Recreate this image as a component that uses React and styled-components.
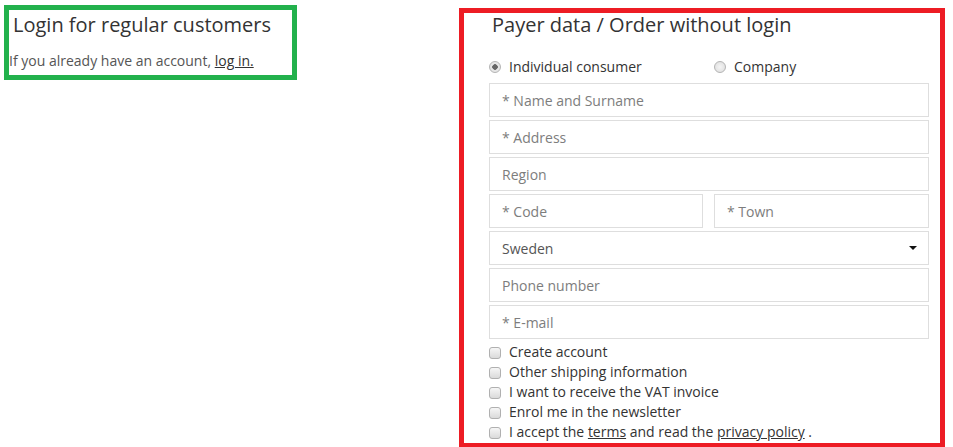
import React from 'react';
import styled, { createGlobalStyle } from 'styled-components';

const GlobalStyle = createGlobalStyle`
  body {
    margin: 0;
    background: #fff;
    font-family: "Open Sans", "Noto Sans", sans-serif;
    color: #333;
  }
`;

/* 페이지 전체 */
const PageBlock = styled.main`
  display: flex;
  align-items: flex-start;
  gap: 162px;
  padding: 5px 0 0 4px;
`;

/* 왼쪽 로그인 안내 */
const LoginBox = styled.section`
  box-sizing: border-box;
  width: 293px;
  border: 5px solid #22b14c;
  padding: 4px 4px 4px 4px;
`;

const Heading = styled.h2`
  margin: 0;
  font-size: 20px;
  font-weight: 400;
  line-height: 22px;
  color: #333;
  padding-left: ${props => props.indent || 0}px;
`;

const Note = styled.p`
  margin: 15px 0 0 -4px;
  font-size: 14px;
  line-height: 20px;
  color: #555;
  a {
    color: #333;
    text-decoration: underline;
  }
`;

/* 오른쪽 주문 폼 */
const OrderBox = styled.section`
  box-sizing: border-box;
  width: 486px;
  margin-top: 3px;
  border: 5px solid #ed1c24;
  border-bottom-width: 4px;
  padding: 1px 11px 1px 25px;
`;

const TypeRow = styled.div`
  display: grid;
  grid-template-columns: 214px 1fr;
  column-gap: 11px;
  margin: 21px 0 6px;
`;

const Choice = styled.label`
  display: flex;
  align-items: center;
  gap: 8px;
  font-size: 14px;
  line-height: 20px;
  color: #333;
`;

const Radio = styled.input.attrs({ type: 'radio' })`
  appearance: none;
  margin: 0;
  width: 12px;
  height: 12px;
  border-radius: 50%;
  border: 1px solid #b4b4b4;
  background: radial-gradient(circle, #f4f4f4 0%, #dcdcdc 100%);
  box-sizing: border-box;
  &:checked {
    background: radial-gradient(circle, #666 0 2.5px, #e6e6e6 3px);
  }
`;

const Fields = styled.div`
  display: grid;
  grid-template-columns: 214px 1fr;
  gap: 3px 11px;
`;

const Field = styled.input`
  grid-column: ${props => (props.half ? 'auto' : '1 / -1')};
  box-sizing: border-box;
  width: 100%;
  height: 34px;
  margin: 0;
  border: 1px solid #dedede;
  border-radius: 0;
  padding: 0 12px;
  font-family: inherit;
  font-size: 14px;
  color: #555;
  outline: none;
  &::placeholder {
    color: #7d7d7d;
  }
`;

const SelectWrap = styled.div`
  grid-column: 1 / -1;
  position: relative;
  &::after {
    content: '';
    position: absolute;
    right: 12px;
    top: 15px;
    border-left: 4px solid transparent;
    border-right: 4px solid transparent;
    border-top: 4px solid #111;
    pointer-events: none;
  }
`;

const Select = styled.select`
  appearance: none;
  box-sizing: border-box;
  width: 100%;
  height: 34px;
  margin: 0;
  border: 1px solid #dedede;
  border-radius: 0;
  background: #fff;
  padding: 0 12px;
  font-family: inherit;
  font-size: 14px;
  color: #555;
  outline: none;
`;

const Options = styled.div`
  display: flex;
  flex-direction: column;
  margin-top: 3px;
`;

const Check = styled.input.attrs({ type: 'checkbox' })`
  appearance: none;
  margin: 2px 0 0;
  width: 12px;
  height: 12px;
  border-radius: 3px;
  border: 1px solid #b0b0b0;
  box-sizing: border-box;
  background: linear-gradient(#f6f6f6, #dadada);
`;

const Links = styled.span`
  a {
    color: #333;
    text-decoration: underline;
  }
`;

const checks = [
  'Create account',
  'Other shipping information',
  'I want to receive the VAT invoice',
  'Enrol me in the newsletter'
];

const App = () => {
  return (
    <>
      <GlobalStyle />
      <PageBlock>
        <LoginBox>
          <Heading>Login for regular customers</Heading>
          <Note>
            If you already have an account, <a href="#login">log in.</a>
          </Note>
        </LoginBox>

        <OrderBox>
          <Heading indent={3}>Payer data / Order without login</Heading>
          <TypeRow>
            <Choice>
              <Radio name="payer" defaultChecked />
              Individual consumer
            </Choice>
            <Choice>
              <Radio name="payer" />
              Company
            </Choice>
          </TypeRow>
          <Fields>
            <Field placeholder="* Name and Surname" />
            <Field placeholder="* Address" />
            <Field placeholder="Region" />
            <Field half placeholder="* Code" />
            <Field half placeholder="* Town" />
            <SelectWrap>
              <Select defaultValue="se">
                <option value="se">Sweden</option>
                <option value="no">Norway</option>
                <option value="fi">Finland</option>
              </Select>
            </SelectWrap>
            <Field placeholder="Phone number" />
            <Field placeholder="* E-mail" />
          </Fields>
          <Options>
            {checks.map(text => (
              <Choice key={text}>
                <Check />
                {text}
              </Choice>
            ))}
            <Choice>
              <Check />
              <Links>
                I accept the <a href="#terms">terms</a> and read the{' '}
                <a href="#privacy">privacy policy</a> .
              </Links>
            </Choice>
          </Options>
        </OrderBox>
      </PageBlock>
    </>
  );
};

export default App;
